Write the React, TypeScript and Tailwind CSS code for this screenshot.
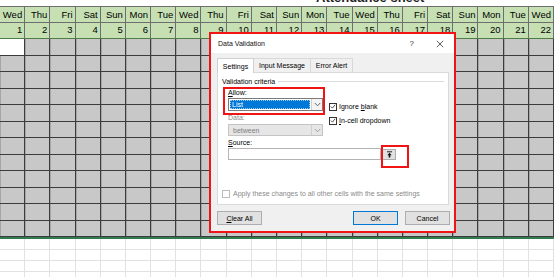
import React from "react";

const DAYS = ["Wed", "Thu", "Fri", "Sat", "Sun", "Mon", "Tue"];
const COLS = Array.from({ length: 22 }, (_, i) => i);

function Check() {
  return (
    <div className="w-[8px] h-[8px] border border-[#333] bg-white flex items-center justify-center shrink-0">
      <svg width="7" height="7" viewBox="0 0 7 7">
        <path d="M1 3.6 L2.8 5.4 L6 1.4" fill="none" stroke="#222" strokeWidth="0.9" />
      </svg>
    </div>
  );
}

function Chevron({ color = "#555" }: { color?: string }) {
  return (
    <svg width="7" height="5" viewBox="0 0 7 5">
      <path d="M0.8 1 L3.5 3.8 L6.2 1" fill="none" stroke={color} strokeWidth="0.9" />
    </svg>
  );
}

export default function App() {
  return (
    <div
      className="relative w-[554px] h-[277px] overflow-hidden bg-white text-black"
      style={{ fontFamily: '"Liberation Sans", Arial, sans-serif' }}
    >
      {/* cut-off title */}
      <div className="h-[6px] overflow-hidden">
        <div className="-mt-[9px] pl-[316px] text-[13px] leading-[13px] font-bold text-[#222]">
          Attendance sheet
        </div>
      </div>

      {/* header row: days */}
      <div className="grid grid-cols-[repeat(22,minmax(0,1fr))] h-[16px] bg-[#c6e0b4] border-t border-[#6e6e6e]">
        {COLS.map((i) => (
          <div
            key={i}
            className="border-r border-b border-[#6e6e6e] text-right pr-[2px] text-[9.5px] leading-[15px]"
          >
            {DAYS[i % 7]}
          </div>
        ))}
      </div>
      {/* header row: numbers */}
      <div className="grid grid-cols-[repeat(22,minmax(0,1fr))] h-[17px] bg-[#c6e0b4]">
        {COLS.map((i) => (
          <div
            key={i}
            className="border-r border-b border-r-[#6e6e6e] border-b-[#4f7d45] text-right pr-[2px] text-[9.5px] leading-[16px]"
          >
            {i + 1}
          </div>
        ))}
      </div>

      {/* gray body */}
      <div className="grid grid-cols-[repeat(22,minmax(0,1fr))] grid-rows-[repeat(12,minmax(0,1fr))] h-[198px]">
        {Array.from({ length: 12 * 22 }, (_, k) => (
          <div
            key={k}
            className={
              k === 0
                ? "bg-white border-r border-b border-[#3c3c3c]"
                : "bg-[#c8c8c8] border-r border-b border-[#3c3c3c] shadow-[inset_1px_0_0_#a6a6a6]"
            }
          />
        ))}
      </div>
      <div className="h-[1.5px] bg-[#2f7d4f]" />

      {/* white empty rows */}
      <div className="grid grid-cols-[repeat(22,minmax(0,1fr))] grid-rows-[repeat(4,11px)]">
        {Array.from({ length: 4 * 22 }, (_, k) => (
          <div key={k} className="border-r border-b border-[#e2e2e2]" />
        ))}
      </div>

      {/* Data Validation dialog */}
      <div className="absolute left-[209px] top-[32px] w-[247px] h-[201px] border-2 border-[#f01414]">
        <div className="w-full h-full flex flex-col bg-[#f0f0f0] text-[7px] leading-[9px]">
          {/* title bar */}
          <div className="h-[19px] bg-white flex items-center pl-[7px] pr-[10px] shrink-0">
            <span className="text-[7px] text-[#111]">Data Validation</span>
            <span className="ml-auto mr-[22px] text-[8px] text-[#333]">?</span>
            <svg width="8" height="8" viewBox="0 0 8 8">
              <path d="M0.8 0.8 L7.2 7.2 M7.2 0.8 L0.8 7.2" stroke="#333" strokeWidth="0.8" />
            </svg>
          </div>

          {/* tabs */}
          <div className="flex items-end pl-[6px] mt-[5px] h-[14px] shrink-0">
            <div className="w-[37px] h-[15px] -mb-px bg-white border border-b-0 border-[#d0d0d0] flex items-center justify-center relative z-10">
              Settings
            </div>
            <div className="w-[57px] h-[14px] bg-[#f0f0f0] border border-l-0 border-b-0 border-[#d9d9d9] flex items-center justify-center">
              Input Message
            </div>
            <div className="w-[42px] h-[14px] bg-[#f0f0f0] border border-l-0 border-b-0 border-[#d9d9d9] flex items-center justify-center">
              Error Alert
            </div>
          </div>

          {/* panel */}
          <div className="relative ml-[6px] mr-[5px] h-[133px] bg-white border border-[#d9d9d9] px-[4px] pt-[4px] shrink-0">
            <div className="flex items-center h-[9px]">
              <span>Validation criteria</span>
              <div className="flex-1 ml-[3px] mr-[0px] h-px bg-[#dcdcdc]" />
            </div>

            <div className="flex ml-[6px]">
              <div className="w-[95px] flex flex-col">
                <div className="mt-[2px] h-[9px]">
                  <span className="underline">A</span>llow:
                </div>
                <div className="mt-[1px] h-[13px] border border-[#7a7a7a] bg-white flex items-stretch">
                  <div className="flex-1 m-[1px] bg-[#0078d7] text-white pl-[1px] flex items-center border border-dotted border-[#9cc8ef]">
                    List
                  </div>
                  <div className="w-[11px] border-l border-[#d0d0d0] bg-[#f4f4f4] flex items-center justify-center">
                    <Chevron />
                  </div>
                </div>
                <div className="mt-[2px] h-[9px] text-[#8a8a8a]">Data:</div>
                <div className="mt-[2px] h-[12px] border border-[#c4c4c4] bg-[#e6e6e6] flex items-stretch text-[#808080]">
                  <div className="flex-1 pl-[4px] flex items-center">between</div>
                  <div className="w-[11px] border-l border-[#cfcfcf] flex items-center justify-center">
                    <Chevron color="#999" />
                  </div>
                </div>
              </div>
              <div className="ml-[6px] pt-[16px] flex flex-col gap-[5px]">
                <div className="flex items-center gap-[2px]">
                  <Check />
                  <span>
                    Ignore <span className="underline">b</span>lank
                  </span>
                </div>
                <div className="flex items-center gap-[2px]">
                  <Check />
                  <span>
                    <span className="underline">I</span>n-cell dropdown
                  </span>
                </div>
              </div>
            </div>

            <div className="ml-[6px] mt-[2px] h-[9px]">
              <span className="underline">S</span>ource:
            </div>
            <div className="ml-[6px] mt-[1px] flex items-center">
              <div className="w-[153px] h-[12px] border border-[#b4b4b4] bg-white" />
              <div className="ml-px w-[14px] h-[11px] bg-[#e1e1e1] border border-[#adadad] flex items-center justify-center">
                <svg width="7" height="7" viewBox="0 0 7 7">
                  <path d="M1 0.8 H6" stroke="#111" strokeWidth="0.9" />
                  <path d="M3.5 1.8 L1.3 4.2 H2.7 V6.4 H4.3 V4.2 H5.7 Z" fill="#111" />
                </svg>
              </div>
            </div>

            <div className="mt-[29px] flex items-center gap-[3px] text-[#8a8a8a]">
              <div className="w-[8px] h-[8px] border border-[#bcbcbc] bg-white" />
              <span>Apply these changes to all other cells with the same settings</span>
            </div>

            {/* red annotation boxes */}
            <div className="absolute left-[5px] top-[14px] w-[102px] h-[28px] border-2 border-[#f01414]" />
            <div className="absolute left-[163px] top-[72px] w-[28px] h-[23px] border-2 border-[#f01414]" />
          </div>

          {/* buttons */}
          <div className="flex mt-[6px] pl-[6px] h-[14px] shrink-0">
            <div className="w-[45px] h-[14px] bg-[#e1e1e1] border border-[#adadad] flex items-center justify-center">
              <span>
                <span className="underline">C</span>lear All
              </span>
            </div>
            <div className="ml-auto w-[45px] h-[14px] bg-[#e1e1e1] border border-[#0078d7] flex items-center justify-center">
              OK
            </div>
            <div className="ml-[7px] mr-[4px] w-[45px] h-[14px] bg-[#e1e1e1] border border-[#adadad] flex items-center justify-center">
              Cancel
            </div>
          </div>
        </div>
      </div>
    </div>
  );
}
